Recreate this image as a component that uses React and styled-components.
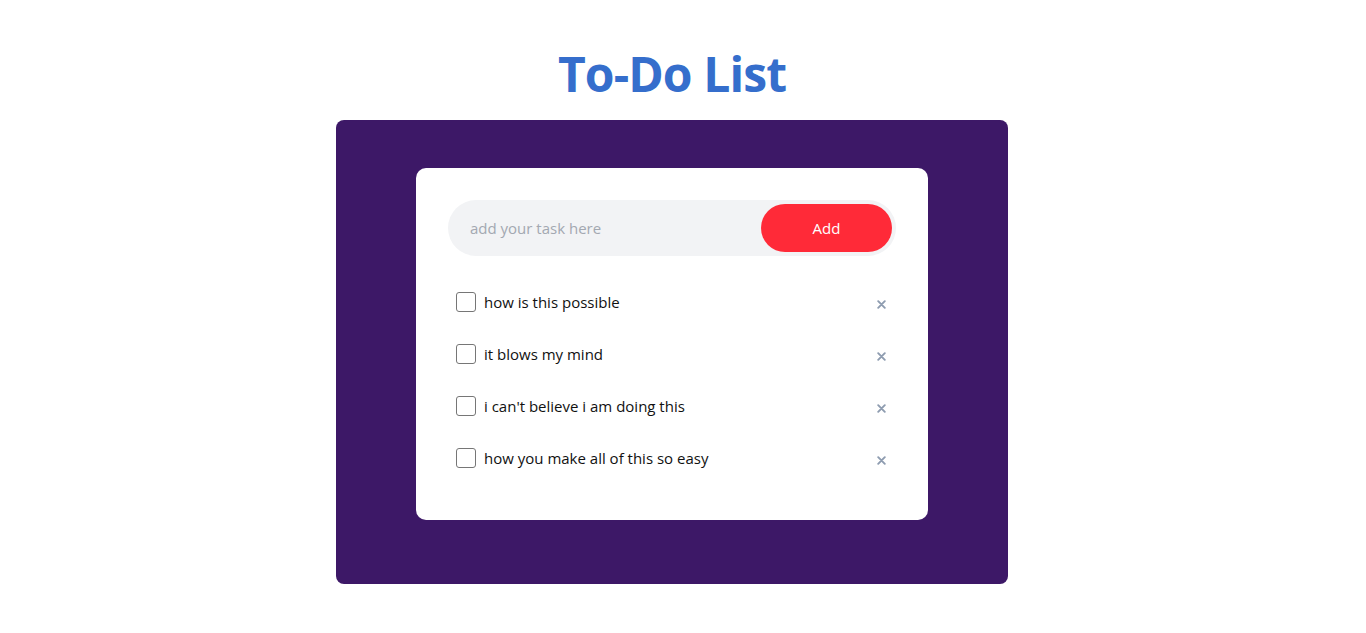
import React, { useState } from 'react'
import styled, { createGlobalStyle } from 'styled-components'

const GlobalStyle = createGlobalStyle`
  body {
    margin: 0;
    background: #ffffff;
    font-family: 'Open Sans', 'Noto Sans', sans-serif;
  }
`

const Page = styled.div`
  display: flex;
  flex-direction: column;
  align-items: center;
  padding: 44px 22px 0 0;
`

const Title = styled.h1`
  margin: 0 0 16px;
  font-size: 48px;
  line-height: 60px;
  font-weight: 700;
  color: #356ecc;
  letter-spacing: -0.9px;
`

const Frame = styled.div`
  width: 672px;
  box-sizing: border-box;
  padding: 48px 80px 64px;
  background: #3d1867;
  border-radius: 8px;
`

const Card = styled.div`
  background: #fff;
  border-radius: 10px;
  padding: 32px 32px 36px;
`

const InputRow = styled.div`
  display: flex;
  align-items: center;
  height: 56px;
  padding: 0 4px 0 20px;
  background: #f2f3f5;
  border-radius: 28px;
  margin-bottom: 20px;
`

const TaskInput = styled.input`
  flex: 1;
  border: none;
  outline: none;
  background: transparent;
  font-family: inherit;
  font-size: 15px;
  color: #333;

  &::placeholder {
    color: #a3a8b1;
  }
`

const AddButton = styled.button`
  width: 131px;
  height: 48px;
  border: none;
  border-radius: 24px;
  background: #ff2a38;
  color: #fff;
  font-family: inherit;
  font-size: 15px;
  cursor: pointer;
`

const List = styled.ul`
  list-style: none;
  margin: 0;
  padding: 0 8px;
`

const Item = styled.li`
  display: flex;
  align-items: center;
  height: 52px;
  font-size: 15px;
  color: #111;
`

const Box = styled.span`
  width: 18px;
  height: 18px;
  border: 1px solid #767676;
  border-radius: 3px;
  margin-right: 8px;
  flex-shrink: 0;
  background: ${p => (p.checked ? '#356ecc' : '#fff')};
`

const Label = styled.span`
  flex: 1;
  text-decoration: ${p => (p.checked ? 'line-through' : 'none')};
`

const Remove = styled.button`
  border: none;
  background: none;
  padding: 0;
  width: 16px;
  height: 16px;
  display: flex;
  align-items: center;
  justify-content: center;
  margin: 4px -1px 0 0;
  cursor: pointer;
`

const tasks = [
  'how is this possible',
  'it blows my mind',
  "i can't believe i am doing this",
  'how you make all of this so easy',
]

export default function App() {
  const [done, setDone] = useState({})
  return (
    <Page>
      <GlobalStyle />
      <Title>To-Do List</Title>
      <Frame>
        <Card>
          <InputRow>
            <TaskInput placeholder="add your task here" />
            <AddButton>Add</AddButton>
          </InputRow>
          <List>
            {tasks.map((t, i) => (
              <Item key={i} onClick={() => setDone({ ...done, [i]: !done[i] })}>
                <Box checked={done[i]} />
                <Label checked={done[i]}>{t}</Label>
                <Remove>
                  <svg width="9" height="9" viewBox="0 0 9 9">
                    <path d="M1.2 1.2L7.8 7.8M7.8 1.2L1.2 7.8" stroke="#8e9cb0" strokeWidth="1.9" strokeLinecap="round" />
                  </svg>
                </Remove>
              </Item>
            ))}
          </List>
        </Card>
      </Frame>
    </Page>
  )
}
